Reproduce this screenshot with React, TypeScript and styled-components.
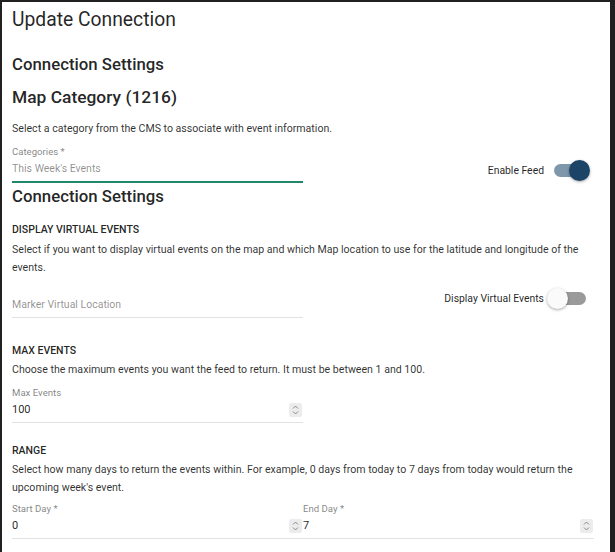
import { createGlobalStyle, styled } from "styled-components";

const GlobalStyle = createGlobalStyle`
  html, body {
    margin: 0;
    padding: 0;
    background: #212121;
    height: 100%;
  }
  body {
    font-family: Roboto, "Liberation Sans", Arial, sans-serif;
    color: rgba(0, 0, 0, 0.87);
  }
`;

const Panel = styled.div`
  margin: 2px 5px 0 2px;
  min-height: 560px;
  background: #fff;
  padding: 0 16px 0 10px;
  box-sizing: border-box;
  overflow: hidden;
`;

const Title = styled.h2`
  margin: 0;
  font-size: 19.3px;
  font-weight: 400;
  line-height: 36px;
  color: rgba(0, 0, 0, 0.87);
`;

const SectionTitle = styled.h3<{ $top: number }>`
  margin: ${(p) => p.$top}px 0 0;
  font-size: 16.8px;
  font-weight: 500;
  line-height: 26px;
`;

const CategoryTitle = styled.h3`
  margin: 6px 0 0;
  font-size: 17.4px;
  font-weight: 500;
  line-height: 28px;
`;

const Overline = styled.h4<{ $top: number }>`
  margin: ${(p) => p.$top}px 0 0;
  font-size: 10.5px;
  font-weight: 500;
  line-height: 18px;
  text-transform: uppercase;
  color: rgba(0, 0, 0, 0.87);
`;

const Description = styled.p<{ $top: number }>`
  margin: ${(p) => p.$top}px 0 0;
  font-size: 10.6px;
  line-height: 18px;
  color: rgba(0, 0, 0, 0.82);
`;

const Row = styled.div<{ $top: number }>`
  display: grid;
  grid-template-columns: 1fr 1fr;
  margin-top: ${(p) => p.$top}px;
`;

const Field = styled.div`
  display: flex;
  flex-direction: column;
  min-width: 0;
`;

const Label = styled.label`
  font-size: 9.6px;
  line-height: 14px;
  color: rgba(0, 0, 0, 0.5);
`;

const InputBox = styled.div<{ $focused?: boolean; $muted?: boolean }>`
  display: flex;
  align-items: center;
  justify-content: space-between;
  padding: 1px 0 3px;
  border-bottom: ${(p) => (p.$focused ? "2px solid #22876a" : "1px solid #e2e2e2")};
  font-size: ${(p) => (p.$muted ? "10.5px" : "11px")};
  line-height: 18px;
  color: ${(p) => (p.$muted ? "rgba(0, 0, 0, 0.45)" : "rgba(0, 0, 0, 0.87)")};
`;

const SwitchCell = styled.div<{ $top: number }>`
  display: flex;
  justify-content: flex-end;
  align-items: center;
  padding-right: 4px;
  margin-top: ${(p) => p.$top}px;
  align-self: start;
  font-size: 10.4px;
  color: rgba(0, 0, 0, 0.87);
`;

const Track = styled.span<{ $on: boolean }>`
  position: relative;
  display: inline-block;
  width: 32px;
  height: 13px;
  border-radius: 7px;
  margin: 0 4px 0 10px;
  background: ${(p) => (p.$on ? "#7e97ab" : "#9a9a9a")};
`;

const Thumb = styled.span<{ $on: boolean }>`
  position: absolute;
  top: -4px;
  left: ${(p) => (p.$on ? "15px" : "-7px")};
  width: 21px;
  height: 21px;
  border-radius: 50%;
  background: ${(p) => (p.$on ? "#1c4466" : "#fafafa")};
  box-shadow: 0 1px 3px rgba(0, 0, 0, 0.35);
`;

const Spinner = styled.span`
  display: inline-flex;
  align-items: center;
  justify-content: center;
  width: 13px;
  height: 14px;
  margin-right: 1px;
  background: #ececec;
  border-radius: 2px;
`;

function Spin() {
  return (
    <Spinner>
      <svg width="7" height="10" viewBox="0 0 7 10" fill="none">
        <path d="M1 3.5 L3.5 1 L6 3.5" stroke="#8a8a8a" strokeWidth="1" />
        <path d="M1 6.5 L3.5 9 L6 6.5" stroke="#8a8a8a" strokeWidth="1" />
      </svg>
    </Spinner>
  );
}

function Toggle({ label, on, top }: { label: string; on: boolean; top: number }) {
  return (
    <SwitchCell $top={top}>
      {label}
      <Track $on={on}>
        <Thumb $on={on} />
      </Track>
    </SwitchCell>
  );
}

export default function App() {
  return (
    <>
      <GlobalStyle />
      <Panel>
        <Title>Update Connection</Title>
        <SectionTitle $top={13}>Connection Settings</SectionTitle>
        <CategoryTitle>Map Category (1216)</CategoryTitle>
        <Description $top={9}>
          Select a category from the CMS to associate with event information.
        </Description>

        <Row $top={7}>
          <Field>
            <Label>Categories *</Label>
            <InputBox $focused $muted>
              This Week's Events
            </InputBox>
          </Field>
          <Toggle label="Enable Feed" on top={19} />
        </Row>

        <SectionTitle $top={0}>Connection Settings</SectionTitle>
        <Overline $top={12}>Display Virtual Events</Overline>
        <Description $top={2}>
          Select if you want to display virtual events on the map and which Map
          location to use for the latitude and longitude of the events.
        </Description>

        <Row $top={18}>
          <Field>
            <InputBox $muted>Marker Virtual Location</InputBox>
          </Field>
          <Toggle label="Display Virtual Events" on={false} top={-3} />
        </Row>

        <Overline $top={24}>Max Events</Overline>
        <Description $top={1}>
          Choose the maximum events you want the feed to return. It must be
          between 1 and 100.
        </Description>
        <Row $top={7}>
          <Field>
            <Label>Max Events</Label>
            <InputBox>
              100
              <Spin />
            </InputBox>
          </Field>
        </Row>

        <Overline $top={19}>Range</Overline>
        <Description $top={1}>
          Select how many days to return the events within. For example, 0 days
          from today to 7 days from today would return the upcoming week's
          event.
        </Description>
        <Row $top={5}>
          <Field>
            <Label>Start Day *</Label>
            <InputBox>
              0
              <Spin />
            </InputBox>
          </Field>
          <Field>
            <Label>End Day *</Label>
            <InputBox>
              7
              <Spin />
            </InputBox>
          </Field>
        </Row>
      </Panel>
    </>
  );
}
